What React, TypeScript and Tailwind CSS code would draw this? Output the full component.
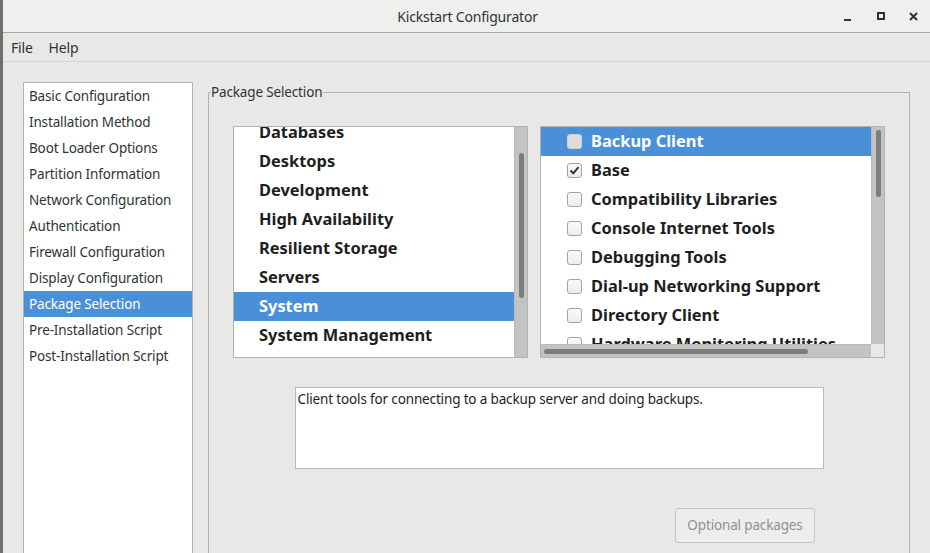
import React from 'react';

const sideItems = [
  'Basic Configuration',
  'Installation Method',
  'Boot Loader Options',
  'Partition Information',
  'Network Configuration',
  'Authentication',
  'Firewall Configuration',
  'Display Configuration',
  'Package Selection',
  'Pre-Installation Script',
  'Post-Installation Script',
];

const groups = [
  'Databases',
  'Desktops',
  'Development',
  'High Availability',
  'Resilient Storage',
  'Servers',
  'System',
  'System Management',
];

const packages: { name: string; checked: boolean }[] = [
  { name: 'Backup Client', checked: false },
  { name: 'Base', checked: true },
  { name: 'Compatibility Libraries', checked: false },
  { name: 'Console Internet Tools', checked: false },
  { name: 'Debugging Tools', checked: false },
  { name: 'Dial-up Networking Support', checked: false },
  { name: 'Directory Client', checked: false },
  { name: 'Hardware Monitoring Utilities', checked: false },
];

const font = { fontFamily: '"Noto Sans", "DejaVu Sans", sans-serif' };

const Checkbox = ({ checked, selected }: { checked: boolean; selected: boolean }) => (
  <div
    className={
      'w-[15px] h-[15px] rounded-[3px] flex items-center justify-center shrink-0 ' +
      (selected ? 'bg-[#dcdcdc] border border-[#d0d0d0]' : 'bg-gradient-to-b from-[#fafafa] to-[#ececec] border border-[#a3a3a3]')
    }
  >
    {checked && (
      <svg width="11" height="11" viewBox="0 0 11 11">
        <path d="M1.5 5.5 L4.3 8.3 L9.5 2.2" fill="none" stroke="#2e3436" strokeWidth="2" />
      </svg>
    )}
  </div>
);

export default function App() {
  return (
    <div className="w-[930px] h-[553px] overflow-hidden flex bg-[#e8e8e7] text-[#2e3436]" style={font}>
      {/* window border */}
      <div className="w-[3px] bg-[#6e6e6e] shrink-0" />
      <div className="flex-1 flex flex-col">
        {/* title bar */}
        <div className="h-[33px] bg-[#efefee] border-b border-[#a6a6a5] flex items-center relative shrink-0">
          <div className="flex-1 text-center text-[14px] tracking-[-0.2px] pl-[2px]">Kickstart Configurator</div>
          <div className="absolute right-0 top-0 h-full flex items-center gap-[20px] pr-[10px]">
            <div className="w-[13px] h-[13px] flex items-end justify-center">
              <div className="w-[7px] h-[2px] bg-[#2e3436] mb-[2px]" />
            </div>
            <div className="w-[13px] h-[13px] flex items-center justify-center">
              <div className="w-[8px] h-[8px] border-2 border-[#2e3436]" />
            </div>
            <svg width="13" height="13" viewBox="0 0 13 13">
              <path d="M3 3 L10 10 M10 3 L3 10" stroke="#2e3436" strokeWidth="2" />
            </svg>
          </div>
        </div>
        {/* menu bar */}
        <div className="h-[29px] border-b border-[#d4d4d3] flex items-center gap-[16px] pl-[8px] text-[14px] tracking-[-0.2px] shrink-0">
          <span>File</span>
          <span>Help</span>
        </div>
        {/* body */}
        <div className="flex-1 flex pt-[20px] pl-[20px] min-h-0">
          <div className="w-[170px] bg-white border border-[#b3b3b2] border-b-0 shrink-0 text-[13.5px] tracking-[-0.15px]">
            {sideItems.map((s) => (
              <div
                key={s}
                className={
                  'h-[26px] flex items-center pl-[5px] ' +
                  (s === 'Package Selection' ? 'bg-[#4a90d9] text-white' : '')
                }
              >
                {s}
              </div>
            ))}
          </div>
          <fieldset className="ml-[15px] w-[702px] border border-[#b3b3b2] border-b-0 p-0 min-w-0">
            <legend className="ml-[2px] text-[13.5px] tracking-[-0.15px] leading-[20px] pr-[1px]">Package Selection</legend>
            <div className="pt-[24px] px-[24px] flex flex-col">
              <div className="flex gap-[12px]">
                {/* group list */}
                <div className="w-[296px] h-[232px] border border-[#b3b3b2] bg-white flex">
                  <div className="flex-1 overflow-hidden">
                    <div className="mt-[-9px] text-[16.4px] font-bold text-[#1e1e1e]">
                      {groups.map((g) => (
                        <div
                          key={g}
                          className={
                            'h-[29px] flex items-center pl-[25px] ' +
                            (g === 'System' ? 'bg-[#4a90d9] text-white' : '')
                          }
                        >
                          {g}
                        </div>
                      ))}
                    </div>
                  </div>
                  <div className="w-[13px] bg-[#c2c3c2] border-l border-[#b9b9b8] flex justify-center pt-[26px]">
                    <div className="w-[5px] h-[145px] rounded-full bg-[#7c7e7e]" />
                  </div>
                </div>
                {/* package list */}
                <div className="w-[346px] h-[232px] border border-[#b3b3b2] bg-white flex flex-col">
                  <div className="flex-1 flex min-h-0">
                    <div className="flex-1 overflow-hidden text-[16.4px] font-bold text-[#1e1e1e]">
                      {packages.map((p, i) => (
                        <div
                          key={p.name}
                          className={
                            'h-[29px] flex items-center pl-[26px] gap-[9px] whitespace-nowrap ' +
                            (i === 0 ? 'bg-[#4a90d9] text-white' : '')
                          }
                        >
                          <Checkbox checked={p.checked} selected={i === 0} />
                          <span>{p.name}</span>
                        </div>
                      ))}
                    </div>
                    <div className="w-[13px] bg-[#c2c3c2] border-l border-[#b9b9b8] flex justify-center pt-[3px]">
                      <div className="w-[5px] h-[67px] rounded-full bg-[#7c7e7e]" />
                    </div>
                  </div>
                  <div className="h-[13px] flex shrink-0">
                    <div className="flex-1 bg-[#c2c3c2] border-t border-[#b9b9b8] flex items-center pl-[3px]">
                      <div className="w-[264px] h-[5px] rounded-full bg-[#7c7e7e]" />
                    </div>
                    <div className="w-[13px] bg-[#e8e8e7]" />
                  </div>
                </div>
              </div>
              {/* description */}
              <div className="self-center mt-[29px] w-[529px] h-[82px] border border-[#b9b9b8] bg-white px-[2px] pt-[1px] text-[13.5px] tracking-[-0.15px] text-[#1e1e1e]">
                Client tools for connecting to a backup server and doing backups.
              </div>
              <div className="flex justify-end mt-[39px] pr-[70px]">
                <div className="w-[140px] h-[35px] rounded-[3px] border border-[#c4c4c3] bg-[#ededec] flex items-center justify-center text-[13.5px] tracking-[-0.15px] text-[#8f9292]">
                  Optional packages
                </div>
              </div>
            </div>
          </fieldset>
        </div>
      </div>
    </div>
  );
}
